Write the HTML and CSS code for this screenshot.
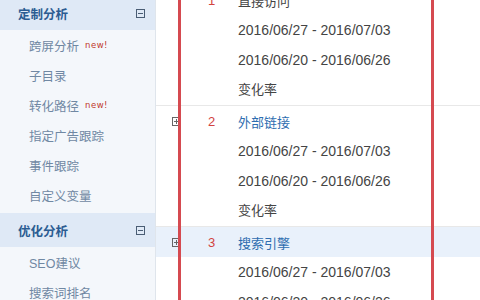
FILE: index.html
```html
<!DOCTYPE html>
<html lang="zh-CN">
<head>
    <meta charset="UTF-8">
    <title>来源分析</title>
    <link rel="stylesheet" href="styles.css">
</head>
<body>
    <div class="sidebar">
        <div class="group first">
            <div class="group-title">定制分析 <span class="fold"></span></div>
            <a href="#" class="item">跨屏分析 <span class="new">new!</span></a>
            <a href="#" class="item">子目录</a>
            <a href="#" class="item">转化路径 <span class="new">new!</span></a>
            <a href="#" class="item">指定广告跟踪</a>
            <a href="#" class="item">事件跟踪</a>
            <a href="#" class="item">自定义变量</a>
        </div>
        <div class="group">
            <div class="group-title">优化分析 <span class="fold"></span></div>
            <a href="#" class="item">SEO建议</a>
            <a href="#" class="item">搜索词排名</a>
        </div>
    </div>

    <div class="main">
        <div class="source">
            <div class="source-head">
                <span></span>
                <span class="num">1</span>
                <span class="name plain">直接访问</span>
            </div>
            <div class="line date">2016/06/27 - 2016/07/03</div>
            <div class="line date">2016/06/20 - 2016/06/26</div>
            <div class="line">变化率</div>
        </div>
        <div class="source">
            <div class="source-head">
                <span class="expand"></span>
                <span class="num">2</span>
                <a href="#" class="name">外部链接</a>
            </div>
            <div class="line date">2016/06/27 - 2016/07/03</div>
            <div class="line date">2016/06/20 - 2016/06/26</div>
            <div class="line">变化率</div>
        </div>
        <div class="source">
            <div class="source-head active">
                <span class="expand"></span>
                <span class="num">3</span>
                <a href="#" class="name">搜索引擎</a>
            </div>
            <div class="line date">2016/06/27 - 2016/07/03</div>
            <div class="line date">2016/06/20 - 2016/06/26</div>
        </div>

        <div class="highlight"></div>
    </div>
</body>
</html>
```

FILE: styles.css
```css
* {
    margin: 0;
    padding: 0;
    box-sizing: border-box;
}

body {
    display: flex;
    height: 300px;
    overflow: hidden;
    background-color: #fff;
    font-family: "Liberation Sans", "Noto Sans CJK SC", sans-serif;
    font-size: 13px;
}

a {
    text-decoration: none;
}

/* Sidebar */
.sidebar {
    width: 156px;
    flex-shrink: 0;
    background-color: #f4f7fb;
    border-right: 1px solid #dfe5ec;
}

.group.first {
    margin-top: -4px;
}

.group + .group {
    margin-top: 3px;
}

.group-title {
    height: 34px;
    display: flex;
    align-items: center;
    justify-content: space-between;
    padding: 0 10px 0 18px;
    background-color: #dfe9f6;
    color: #2b5c92;
    font-weight: bold;
    font-size: 12.5px;
}

.fold {
    width: 9px;
    height: 9px;
    border: 1px solid #4a5d74;
    position: relative;
}

.fold::after {
    content: "";
    position: absolute;
    left: 1px;
    right: 1px;
    top: 3px;
    height: 1px;
    background-color: #4a5d74;
}

.item {
    display: flex;
    align-items: center;
    height: 30px;
    padding-left: 29px;
    color: #7088a3;
    font-size: 12.5px;
}

.new {
    margin-left: 6px;
    color: #c0392b;
    font-family: "DejaVu Sans", sans-serif;
    font-size: 8.5px;
    letter-spacing: 0.5px;
}

/* Main */
.main {
    flex: 1;
    position: relative;
    overflow: hidden;
}

.source {
    border-bottom: 1px solid #e8e8e8;
}

.source:first-child {
    margin-top: -15px;
}

.source-head {
    display: grid;
    grid-template-columns: 33px 33px 1fr;
    align-items: center;
    height: 30px;
    padding-left: 16px;
}

.source-head.active {
    background-color: #e9f1fb;
}

.expand {
    width: 9px;
    height: 9px;
    border: 1px solid #666;
    position: relative;
}

.expand::before,
.expand::after {
    content: "";
    position: absolute;
    background-color: #666;
}

.expand::before {
    left: 1px;
    right: 1px;
    top: 3px;
    height: 1px;
}

.expand::after {
    top: 1px;
    bottom: 1px;
    left: 3px;
    width: 1px;
}

.num {
    color: #d2433f;
    padding-left: 3px;
}

.name {
    color: #2e6db0;
}

.name.plain {
    color: #444;
}

.line {
    height: 30px;
    line-height: 30px;
    padding-left: 82px;
    color: #444;
}

.date {
    font-size: 14px;
}

/* red box drawn over the table */
.highlight {
    position: absolute;
    left: 22px;
    width: 256px;
    top: -10px;
    bottom: -10px;
    border-left: 3px solid #d54a50;
    border-right: 3px solid #d54a50;
}
```
